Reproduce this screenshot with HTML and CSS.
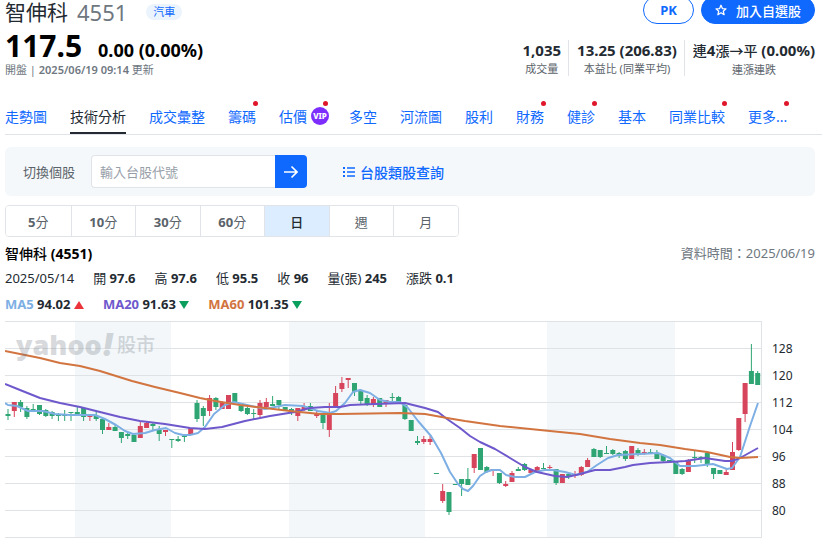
FILE: index.html
```html
<!DOCTYPE html>
<html lang="zh-Hant">

<head>
    <meta charset="UTF-8">
    <meta name="viewport" content="width=device-width, initial-scale=1.0">
    <title>智伸科 (4551) 技術分析</title>
    <link rel="stylesheet" href="styles.css">
</head>

<body>

    <header class="quote">
        <div class="quote-top">
            <h1>智伸科</h1>
            <span class="symbol">4551</span>
            <a class="sector" href="#">汽車</a>
            <div class="actions">
                <button class="btn-pk" type="button">PK</button>
                <button class="btn-add" type="button">
                    <svg width="12" height="12" viewBox="0 0 24 24" fill="none" stroke="currentColor" stroke-width="2.6" stroke-linejoin="round">
                        <path d="M12 2.5l2.8 6.6 7.1.6-5.4 4.7 1.7 7-6.2-3.8-6.2 3.8 1.7-7-5.4-4.7 7.1-.6z" />
                    </svg>
                    加入自選股
                </button>
            </div>
        </div>
        <div class="quote-main">
            <div>
                <div class="price-row">
                    <span class="price">117.5</span>
                    <span class="change">0.00 (0.00%)</span>
                </div>
                <div class="updated">開盤 | <b>2025/06/19 09:14</b> 更新</div>
            </div>
            <ul class="stats">
                <li><strong>1,035</strong><span>成交量</span></li>
                <li><strong>13.25 (206.83)</strong><span>本益比 (同業平均)</span></li>
                <li><strong><i>連</i>4<i>漲→平</i> (0.00%)</strong><span>連漲連跌</span></li>
            </ul>
        </div>
    </header>

    <nav class="tabs">
        <a href="#">走勢圖</a>
        <a href="#" class="active">技術分析</a>
        <a href="#">成交彙整</a>
        <a href="#" class="new">籌碼</a>
        <a href="#" class="new">估價<span class="vip">VIP</span></a>
        <a href="#">多空</a>
        <a href="#">河流圖</a>
        <a href="#">股利</a>
        <a href="#" class="new">財務</a>
        <a href="#" class="new">健診</a>
        <a href="#">基本</a>
        <a href="#" class="new">同業比較</a>
        <a href="#" class="new">更多...</a>
    </nav>

    <main>
        <form class="switcher">
            <label for="code">切換個股</label>
            <div class="search">
                <input type="text" id="code" placeholder="輸入台股代號">
                <button type="button" aria-label="搜尋">
                    <svg width="14" height="14" viewBox="0 0 14 14" fill="none" stroke="currentColor" stroke-width="1.6">
                        <path d="M0 7h13M7.500 1.500L13 7l-5.500 5.500" />
                    </svg>
                </button>
            </div>
            <a class="list-link" href="#">
                <svg width="12" height="12" viewBox="0 0 12 12" fill="currentColor">
                    <path d="M0 1h2v2H0zM4 1.300h8v1.400H4zM0 5h2v2H0zM4 5.300h8v1.400H4zM0 9h2v2H0zM4 9.300h8v1.400H4z" />
                </svg>
                台股類股查詢
            </a>
        </form>

        <div class="periods">
            <button type="button"><b>5</b>分</button>
            <button type="button"><b>10</b>分</button>
            <button type="button"><b>30</b>分</button>
            <button type="button"><b>60</b>分</button>
            <button type="button" class="selected">日</button>
            <button type="button">週</button>
            <button type="button">月</button>
        </div>

        <div class="chart-head">
            <h2>智伸科 <b>(4551)</b></h2>
            <span class="time">資料時間：2025/06/19</span>
        </div>
        <div class="info">
            <span>2025/05/14</span>
            <span>開 <b>97.6</b></span>
            <span>高 <b>97.6</b></span>
            <span>低 <b>95.5</b></span>
            <span>收 <b>96</b></span>
            <span>量(張) <b>245</b></span>
            <span>漲跌 <b>0.1</b></span>
        </div>
        <div class="info averages">
            <span><b class="ma5">MA5</b> <b>94.02</b> <i class="up"></i></span>
            <span><b class="ma20">MA20</b> <b>91.63</b> <i class="down"></i></span>
            <span><b class="ma60">MA60</b> <b>101.35</b> <i class="down"></i></span>
        </div>

        <div class="chart">
            <svg id="plot" viewBox="0 0 757 217" preserveAspectRatio="none"></svg>
            <div class="watermark"><b>yahoo</b><em>!</em><span>股市</span></div>
            <div class="axis">
                <span>128</span>
                <span>120</span>
                <span>112</span>
                <span>104</span>
                <span>96</span>
                <span>88</span>
                <span>80</span>
            </div>
        </div>
    </main>

    <script src="chart.js"></script>
</body>

</html>
```
FILE: styles.css
```css
* {
    box-sizing: border-box;
}

body {
    font-family: 'Noto Sans', 'Noto Sans CJK TC', sans-serif;
    margin: 0;
    padding: 0 7px 0 5px;
    color: #232a31;
    background-color: #fff;
    font-size: 13px;
}

button,
input {
    font-family: inherit;
    margin: 0;
}

a {
    color: #0f69ff;
    text-decoration: none;
}

i {
    font-style: normal;
}

/* quote header */
.quote-top {
    display: flex;
    align-items: center;
    height: 24px;
}

h1 {
    margin: 0;
    font-size: 21px;
    line-height: 24px;
    font-weight: 400;
}

.symbol {
    margin-left: 9px;
    font-size: 22px;
    line-height: 24px;
    color: #6e7780;
}

.sector {
    margin-left: 19px;
    padding: 0 7px;
    border-radius: 8px;
    background-color: #ebf4fd;
    font-size: 11px;
    line-height: 16px;
}

.actions {
    display: flex;
    gap: 7px;
    margin: -4px 0 0 auto;
}

.actions button {
    height: 28px;
    padding: 0;
    border: 1px solid #0f69ff;
    border-radius: 14px;
    font-size: 13px;
    font-weight: 500;
    cursor: pointer;
}

.btn-pk {
    width: 51px;
    background-color: #fff;
    color: #0f69ff;
}

.actions .btn-pk {
    font-weight: bold;
}

.btn-add {
    display: flex;
    align-items: center;
    justify-content: center;
    gap: 9px;
    width: 114px;
    background-color: #0f69ff;
    color: #fff;
}

.quote-main {
    display: flex;
    justify-content: space-between;
    padding-top: 5px;
}

.price-row {
    display: flex;
    align-items: baseline;
    gap: 16px;
    font-weight: bold;
    color: #000;
}

.price {
    font-size: 30px;
    line-height: 33px;
}

.change {
    font-size: 18px;
    line-height: 20px;
}

.updated {
    font-size: 11px;
    line-height: 16px;
    color: #6e7780;
}

.updated b {
    font-weight: 600;
}

.stats {
    display: flex;
    margin: 11px 0 0;
    padding: 0;
    height: 36px;
    list-style: none;
    text-align: center;
}

.stats li {
    padding: 0 7px 0 8px;
    border-left: 1px solid #e0e4e9;
}

.stats li:first-child {
    border-left: none;
}

.stats li:last-child {
    padding-right: 0;
}

.stats strong,
.stats span {
    display: block;
}

.stats strong {
    font-size: 15px;
    line-height: 20px;
}

.stats strong i {
    font-size: 14px;
    font-weight: 500;
}

.stats span {
    font-size: 11px;
    line-height: 18px;
    color: #5b636a;
}

/* tabs */
.tabs {
    display: flex;
    gap: 23px;
    margin: 22px -7px 0 0;
    border-bottom: 1px solid #e0e4e9;
    white-space: nowrap;
}

.tabs a {
    position: relative;
    display: flex;
    align-items: center;
    height: 34px;
    border-bottom: 2px solid transparent;
    font-size: 14px;
}

.tabs .active {
    color: #232a31;
    border-bottom-color: #232a31;
}

.tabs .new::after {
    content: "";
    position: absolute;
    top: 1px;
    right: -2px;
    width: 5px;
    height: 5px;
    border-radius: 50%;
    background-color: #e0162b;
}

.vip {
    width: 18px;
    height: 18px;
    margin: 0 -3px 0 4px;
    border-radius: 50%;
    background-color: #7d2eff;
    color: #fff;
    font-size: 8px;
    font-weight: 800;
    line-height: 18px;
    text-align: center;
}

/* stock switcher */
.switcher {
    display: flex;
    align-items: center;
    margin-top: 12px;
    padding: 8px 18px;
    border-radius: 6px;
    background-color: #f5f8fa;
}

.switcher label {
    color: #5b636a;
    margin-right: 16px;
}

.search {
    display: flex;
    width: 216px;
}

.search input {
    flex: 1;
    min-width: 0;
    height: 33px;
    padding: 0 8px;
    border: 1px solid #e0e4e9;
    border-right: none;
    border-radius: 4px 0 0 4px;
    font-size: 13px;
}

.search input::placeholder {
    color: #979ea8;
}

.search button {
    display: flex;
    align-items: center;
    justify-content: center;
    width: 32px;
    padding: 0;
    border: none;
    border-radius: 0 4px 4px 0;
    background-color: #0f69ff;
    color: #fff;
}

.list-link {
    display: flex;
    align-items: center;
    gap: 5px;
    margin-left: 36px;
    font-size: 14px;
    font-weight: 500;
}

/* period buttons */
.periods {
    display: grid;
    grid-template-columns: repeat(7, 1fr);
    width: 56%;
    margin-top: 9px;
    border: 1px solid #e0e4e9;
    border-radius: 4px;
    overflow: hidden;
}

.periods button {
    height: 30px;
    padding: 0;
    border: none;
    border-left: 1px solid #e0e4e9;
    background-color: #fff;
    color: #5b636a;
    font-size: 13px;
}

.periods button:first-child {
    border-left: none;
}

.periods .selected {
    background-color: #dcedff;
    color: #232a31;
    font-weight: 500;
}

/* chart header */
.chart-head {
    display: flex;
    justify-content: space-between;
    margin-top: 6px;
    line-height: 22px;
}

h2 {
    margin: 0;
    font-size: 14px;
    font-weight: 500;
    color: #000;
}

.time {
    line-height: 20px;
    color: #6e7780;
}

.info {
    display: flex;
    gap: 19px;
    line-height: 26px;
}

.ma5 {
    color: #7dafe4;
}

.ma20 {
    color: #6e58cc;
}

.ma60 {
    color: #d2743f;
}

.up,
.down {
    display: inline-block;
    border: 5px solid transparent;
    border-top-width: 0;
    border-bottom: 8px solid #eb333b;
}

.down {
    border-top: 8px solid #0a9f5d;
    border-bottom-width: 0;
}

/* chart */
.chart {
    position: relative;
    display: flex;
    margin-top: 4px;
}

#plot {
    flex: 1;
    min-width: 0;
    height: 217px;
}

.watermark {
    position: absolute;
    top: 8px;
    left: 11px;
    display: flex;
    align-items: center;
    color: #6e7780;
    opacity: 0.27;
    line-height: 32px;
}

.watermark b {
    font-family: 'Open Sans', sans-serif;
    font-size: 27px;
    font-weight: 800;
}

.watermark em {
    font-family: Inter, sans-serif;
    font-size: 32px;
    font-weight: 900;
}

.watermark span {
    margin-left: 3px;
    font-size: 19px;
    font-weight: 500;
}

.axis {
    width: 53px;
    padding: 14px 0 0 10px;
    font-size: 12px;
    line-height: 27px;
}

.axis span {
    display: block;
}
```
FILE: chart.js
```js
const UP = '#d6455b';
const DOWN = '#2fa574';
const STEP = 6.3;

// [direction, high, body top, body bottom, low]
const candles = [
    ['d', 88, 93, 95, 99], ['u', 81, 81, 90, 96], ['d', 79, 81, 86, 91], ['d', 85, 87, 96, 98], ['d', 83, 88, 89, 90],
    ['d', 84, 84, 93, 94], ['d', 88, 89, 95, 96], ['d', 90, 91, 95, 98], ['d', 92, 94, 95, 100], ['d', 89, 94, 95, 100],
    ['d', 91, 91, 92, 100], ['d', 86, 91, 93, 93], ['d', 87, 87, 96, 100], ['u', 95, 95, 96, 100], ['d', 91, 95, 98, 100],
    ['d', 98, 98, 109, 113], ['u', 102, 106, 109, 109], ['d', 104, 106, 110, 110], ['d', 111, 111, 117, 122], ['d', 111, 113, 115, 118],
    ['d', 114, 114, 121, 121], ['u', 101, 105, 117, 117], ['u', 101, 102, 107, 107], ['d', 102, 103, 105, 109], ['d', 105, 109, 113, 120],
    ['u', 109, 109, 111, 115], ['d', 118, 118, 119, 127], ['d', 115, 118, 120, 121], ['d', 114, 115, 116, 121], ['u', 107, 107, 113, 113],
    ['d', 79, 82, 98, 101], ['d', 85, 87, 95, 105], ['u', 74, 77, 90, 95], ['d', 76, 77, 86, 89], ['u', 80, 81, 88, 88],
    ['u', 74, 74, 88, 88], ['d', 72, 72, 82, 82], ['d', 85, 85, 90, 91], ['d', 86, 87, 93, 94], ['d', 88, 92, 93, 98],
    ['u', 79, 82, 94, 96], ['u', 77, 81, 86, 88], ['d', 75, 83, 85, 85], ['d', 79, 79, 84, 88], ['d', 86, 86, 89, 89],
    ['d', 87, 88, 91, 94], ['u', 87, 87, 95, 100], ['u', 82, 85, 89, 90], ['d', 82, 85, 90, 90], ['u', 90, 92, 95, 97],
    ['d', 92, 92, 102, 108], ['u', 82, 92, 109, 116], ['u', 65, 72, 86, 87], ['u', 56, 62, 68, 71], ['u', 57, 57, 59, 67],
    ['d', 62, 62, 71, 75], ['d', 68, 70, 80, 84], ['d', 74, 77, 84, 85], ['u', 76, 78, 83, 86], ['d', 77, 77, 86, 86],
    ['u', 79, 79, 83, 86], ['d', 72, 76, 77, 80], ['d', 75, 76, 81, 82], ['d', 83, 84, 98, 99], ['d', 99, 99, 110, 110],
    ['d', 115, 120, 122, 124], ['u', 115, 118, 121, 123], ['u', 115, 118, 121, 124], ['d', 152, 152, 153, 153], ['u', 163, 170, 180, 182],
    ['d', 171, 171, 191, 194], ['d', 163, 163, 164, 164], ['d', 158, 158, 163, 175], ['d', 147, 158, 164, 164], ['u', 133, 133, 147, 152],
    ['d', 127, 127, 149, 149], ['d', 145, 146, 151, 152], ['u', 148, 148, 150, 155], ['d', 152, 152, 162, 163], ['u', 160, 163, 165, 166],
    ['u', 150, 152, 161, 161], ['d', 146, 148, 150, 150], ['d', 142, 143, 149, 150], ['u', 148, 149, 152, 152], ['u', 145, 146, 151, 151],
    ['d', 142, 147, 148, 148], ['u', 144, 146, 147, 149], ['d', 148, 148, 162, 164], ['u', 153, 153, 162, 162], ['d', 152, 153, 155, 158],
    ['u', 150, 153, 155, 157], ['u', 145, 146, 154, 155], ['u', 137, 139, 146, 146], ['d', 127, 128, 136, 136], ['d', 129, 129, 136, 137],
    ['d', 125, 132, 133, 133], ['d', 128, 129, 133, 134], ['d', 131, 132, 135, 137], ['d', 129, 130, 138, 140], ['u', 125, 125, 138, 138],
    ['d', 127, 129, 134, 135], ['u', 128, 131, 132, 134], ['d', 128, 131, 132, 133], ['d', 129, 132, 138, 138], ['d', 133, 134, 140, 141],
    ['d', 139, 139, 140, 141], ['d', 141, 141, 153, 153], ['d', 147, 148, 153, 154], ['u', 138, 140, 151, 151], ['d', 130, 136, 137, 142],
    ['d', 135, 136, 138, 142], ['d', 131, 132, 144, 146], ['d', 147, 147, 153, 158], ['d', 149, 149, 153, 153], ['u', 148, 151, 154, 154],
    ['u', 121, 131, 149, 149], ['u', 97, 97, 129, 130], ['u', 62, 62, 93, 101], ['d', 23, 50, 63, 63], ['d', 50, 52, 64, 64]
];

// moving averages
const averages = [
    ['#7dafe4', '0,82 3,84 12,85 23,90 38,90 50,93 65,94 90,94 100,98 111,104 120,110 128,113 140,112 150,109 161,107 170,112 178,114 185,114 193,112 200,106 209,93 220,84 229,81 242,84 260,88 280,84 298,85 313,90 325,92 331,90 340,82 348,71 355,69 365,72 375,79 385,81 395,81 403,87 413,100 426,115 436,132 445,151 453,163 458,168 463,170 468,165 475,155 481,151 487,149 495,149 501,154 510,156 520,156 530,151 540,149 548,149 560,151 571,154 582,151 592,144 603,137 613,134 635,133 653,132 665,137 675,145 690,145 708,143 722,148 727,147 735,136 745,105 753,82'],
    ['#6e58cc', '0,63 15,69 35,77 55,82 75,86 95,91 115,96 135,100 160,103 185,107 200,108 217,106 240,100 265,95 290,91 305,87 320,86 335,86 345,84 370,83 400,82 420,87 433,91 442,98 455,107 465,115 475,121 490,128 505,137 520,146 532,151 550,155 562,156 575,153 590,149 605,149 620,146 628,144 645,142 665,141 680,140 700,137 720,140 727,140 735,137 753,127'],
    ['#d2743f', '0,30 35,37 55,42 75,45 95,50 127,60 150,66 175,72 195,77 210,80 235,84 260,87 285,90 315,93 335,93 395,92 420,93 442,97 460,100 495,105 535,109 575,113 605,118 635,122 655,124 680,128 702,131 725,136 735,137 753,136']
];

const bands = [[70, 96], [284, 136], [542, 128]];

let out = '';
bands.forEach(([x, w]) => {
    out += `<rect x="${x}" y="0" width="${w}" height="217" fill="#f3f7fa"/>`;
});
for (let y = 0; y <= 216; y += 27) {
    out += `<rect x="0" y="${y}" width="757" height="1" fill="#e0e3e6"/>`;
}
out += '<rect x="756" y="0" width="1" height="217" fill="#e0e3e6"/>';

candles.forEach(([dir, high, top, bottom, low], i) => {
    const x = 3 + i * STEP;
    const color = dir === 'u' ? UP : DOWN;
    out += `<path d="M${x} ${high}V${low}" stroke="${color}"/>`;
    out += `<rect x="${x - 2.5}" y="${top}" width="5" height="${bottom - top}" fill="${color}"/>`;
});

averages.forEach(([color, points]) => {
    out += `<polyline points="${points}" fill="none" stroke="${color}" stroke-width="2" stroke-linejoin="round"/>`;
});

document.getElementById('plot').innerHTML = out;
```
